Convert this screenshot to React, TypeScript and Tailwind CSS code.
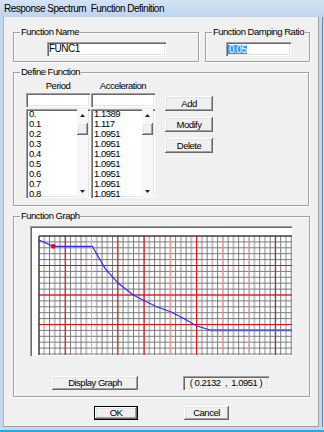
import React from "react";

const raised =
  "shadow-[inset_-1px_-1px_0_#696969,inset_1px_1px_0_#ffffff,inset_-2px_-2px_0_#a0a0a0,inset_2px_2px_0_#e3e3e3]";
const sunken =
  "shadow-[inset_1px_1px_0_#a0a0a0,inset_2px_2px_0_#696969,inset_-1px_-1px_0_#ffffff,inset_-2px_-2px_0_#e3e3e3]";

function Group({
  label,
  className,
  children,
}: {
  label: string;
  className: string;
  children?: React.ReactNode;
}) {
  return (
    <div
      className={`relative border border-[#a0a0a0] shadow-[inset_1px_1px_0_#ffffff,1px_1px_0_#ffffff] ${className}`}
    >
      <span className="absolute -top-[7px] left-[6px] bg-[#f0f0f0] px-[1px] leading-[12px] whitespace-pre">
        {label}
      </span>
      {children}
    </div>
  );
}

function Btn({ children, className }: { children: React.ReactNode; className: string }) {
  return (
    <div className={`flex items-center justify-center bg-[#f0f0f0] leading-[10px] ${raised} ${className}`}>
      {children}
    </div>
  );
}

function Scrollbar() {
  return (
    <div className="flex w-[11px] flex-col items-center bg-[#f7f7f7] pt-[1px]">
      <div className="flex h-[10px] w-full items-center justify-center">
        <svg width="5" height="3" viewBox="0 0 5 3">
          <path d="M2.5 0 L5 3 L0 3 Z" fill="#222" />
        </svg>
      </div>
      <div className={`mt-[3px] h-[12px] w-[11px] bg-[#f0f0f0] ${raised}`} />
      <div className="flex-1" />
      <div className="mb-[2px] flex h-[10px] w-full items-center justify-center">
        <svg width="5" height="3" viewBox="0 0 5 3">
          <path d="M0 0 L5 0 L2.5 3 Z" fill="#222" />
        </svg>
      </div>
    </div>
  );
}

function ListBox({ items }: { items: string[] }) {
  return (
    <div className={`flex h-[89px] w-[64px] overflow-hidden bg-white pl-[2px] pr-[2px] ${sunken}`}>
      <div className="flex-1 overflow-hidden pl-[1px]">
        {items.map((t, i) => (
          <div key={i} className="h-[10px] text-[9.5px] leading-[10px]">
            {t}
          </div>
        ))}
      </div>
      <Scrollbar />
    </div>
  );
}

function Graph() {
  const x0 = 9;
  const y0 = 10;
  const xs: number[] = [];
  for (let i = 0; i <= 48; i++) xs.push(x0 + i * 5.254);
  const ys: number[] = [];
  for (let j = 0; j <= 20; j++) ys.push(y0 + j * 5.9);
  const majorColors: Record<number, string> = {
    1: "#ff0000",
    2: "#ff9a9a",
    3: "#ff0000",
    4: "#ff0000",
    5: "#ff9a9a",
    6: "#ff0000",
    7: "#ff9a9a",
    8: "#ff9a9a",
    9: "#ff0000",
  };
  const curve =
    "9,14 23.3,20.3 62.3,20.3 75,42.3 88.3,57.3 103.3,69 114.3,74.7 126.7,80.7 140.7,85.7 153.3,92.3 166.3,99.7 180,104";
  return (
    <svg width="262" height="130" viewBox="0 0 262 130" className="block">
      <rect x="0" y="0" width="262" height="130" fill="#ffffff" />
      {xs.map((x, i) =>
        i % 2 === 1 ? (
          <line key={"l" + i} x1={x} y1={y0} x2={x} y2={129} stroke="#c4c4c4" strokeWidth="2" />
        ) : null
      )}
      {xs.map((x, i) =>
        i % 2 === 0 ? (
          <line key={"d" + i} x1={x} y1={y0} x2={x} y2={129} stroke="#7a7a7a" strokeWidth="1" />
        ) : null
      )}
      {ys.map((y, j) => (
        <line key={"h" + j} x1={x0} y1={y} x2={262} y2={y} stroke="#7a7a7a" strokeWidth="1" />
      ))}
      {[1, 2, 3, 4, 5, 6, 7, 8, 9].map((k) => (
        <line
          key={"mv" + k}
          x1={x0 + k * 26.27}
          y1={y0}
          x2={x0 + k * 26.27}
          y2={129}
          stroke={majorColors[k]}
          strokeWidth="1"
        />
      ))}
      {[5, 10, 15].map((j) => (
        <line key={"mh" + j} x1={x0} y1={y0 + j * 5.9} x2={262} y2={y0 + j * 5.9} stroke="#ff0000" strokeWidth="1" />
      ))}
      <line x1={x0} y1={y0} x2={262} y2={y0} stroke="#202020" strokeWidth="1" />
      <line x1={x0} y1={y0} x2={x0} y2={129} stroke="#202020" strokeWidth="1" />
      <polyline points={curve} fill="none" stroke="#2a2aff" strokeWidth="1.2" />
      <line x1="180" y1="104.3" x2="262" y2="104.3" stroke="#4a5aff" strokeWidth="2" />
      <circle cx="23.3" cy="20.3" r="2.4" fill="#ff0000" />
      <line x1="0.5" y1="0" x2="0.5" y2="130" stroke="#a0a0a0" />
      <line x1="0" y1="0.5" x2="262" y2="0.5" stroke="#a0a0a0" />
      <line x1="1.5" y1="1" x2="1.5" y2="130" stroke="#696969" />
      <line x1="1" y1="1.5" x2="262" y2="1.5" stroke="#696969" />
    </svg>
  );
}

export default function App() {
  const periods = ["0.", "0.1", "0.2", "0.3", "0.4", "0.5", "0.6", "0.7", "0.8"];
  const accs = ["1.1389", "1.117", "1.0951", "1.0951", "1.0951", "1.0951", "1.0951", "1.0951", "1.0951"];
  return (
    <div className="flex h-[432px] w-[324px] flex-col overflow-hidden bg-[#c3d7ee] font-['Liberation_Sans',Arial,sans-serif] text-[9.5px] tracking-[-0.5px] text-black">
      <div className="flex h-[17px] items-center bg-gradient-to-b from-[#d3e3f5] to-[#bfd4ec] pl-[4px] text-[10px] tracking-[-0.5px] whitespace-pre">
        Response Spectrum  Function Definition
      </div>
      <div className="flex h-[410px]">
        <div className="w-[3px] bg-[#c3d7ee]" />
        <div className="flex w-[316px] flex-col border-b border-l border-r border-b-[#a0a0a0] border-l-[#9fb5cf] border-r-[#a0a0a0] bg-[#f0f0f0] pl-[9px] pt-[15px]">
          <div className="flex gap-[6px]">
            <Group label="Function Name" className="h-[30px] w-[186px] pl-[33px] pt-[9px]">
              <div className={`h-[14px] w-[119px] bg-white pl-[2px] text-[10px] leading-[14px] ${sunken}`}>FUNC1</div>
            </Group>
            <Group label="Function Damping Ratio" className="h-[30px] w-[105px] pl-[20px] pt-[9px]">
              <div className={`flex h-[14px] w-[65px] items-center bg-white pl-[2px] text-[10px] ${sunken}`}>
                <span className="inline-block bg-[#3399ff] px-[1px] leading-[9px] text-white">0.05</span>
              </div>
            </Group>
          </div>

          <Group label="Define Function" className="mt-[10px] flex h-[134px] w-[296px] pl-[12px] pt-[8px]">
            <div className="flex w-[129px] flex-col">
              <div className="flex h-[10px] gap-[1px] leading-[10px]">
                <div className="w-[64px] text-center">Period</div>
                <div className="w-[64px] text-center">Acceleration</div>
              </div>
              <div className="mt-[2px] flex gap-[1px]">
                <div className={`h-[14px] w-[64px] bg-white ${sunken}`} />
                <div className={`h-[14px] w-[64px] bg-white ${sunken}`} />
              </div>
              <div className="mt-[2px] flex gap-[1px]">
                <ListBox items={periods} />
                <ListBox items={accs} />
              </div>
            </div>
            <div className="ml-[10px] mt-[15px] flex flex-col gap-[6px]">
              <Btn className="h-[15px] w-[48px]">Add</Btn>
              <Btn className="h-[15px] w-[48px]">Modify</Btn>
              <Btn className="h-[15px] w-[48px]">Delete</Btn>
            </div>
          </Group>

          <Group label="Function Graph" className="mt-[10px] h-[181px] w-[297px] pl-[16px] pt-[9px]">
            <Graph />
            <div className="mt-[20px] flex">
              <Btn className="ml-[22px] h-[14px] w-[86px]">Display Graph</Btn>
              <div
                className={`ml-[45px] flex h-[14px] w-[86px] items-center justify-center bg-[#f0f0f0] whitespace-pre ${sunken}`}
              >
                ( 0.2132  ,  1.0951 )
              </div>
            </div>
          </Group>

          <div className="mt-[9px] flex">
            <Btn className="ml-[81px] h-[14px] w-[44px] border border-black">OK</Btn>
            <Btn className="ml-[46px] h-[14px] w-[45px]">Cancel</Btn>
          </div>
        </div>
        <div className="w-[3px] bg-[#c3d7ee]" />
        <div className="w-[1px] bg-[#6f849e]" />
        <div className="w-[1px] bg-[#c3d7ee]" />
      </div>
      <div className="h-[3px] bg-[#c3d7ee]" />
      <div className="h-[2px] bg-[#2aa8dc]" />
    </div>
  );
}
